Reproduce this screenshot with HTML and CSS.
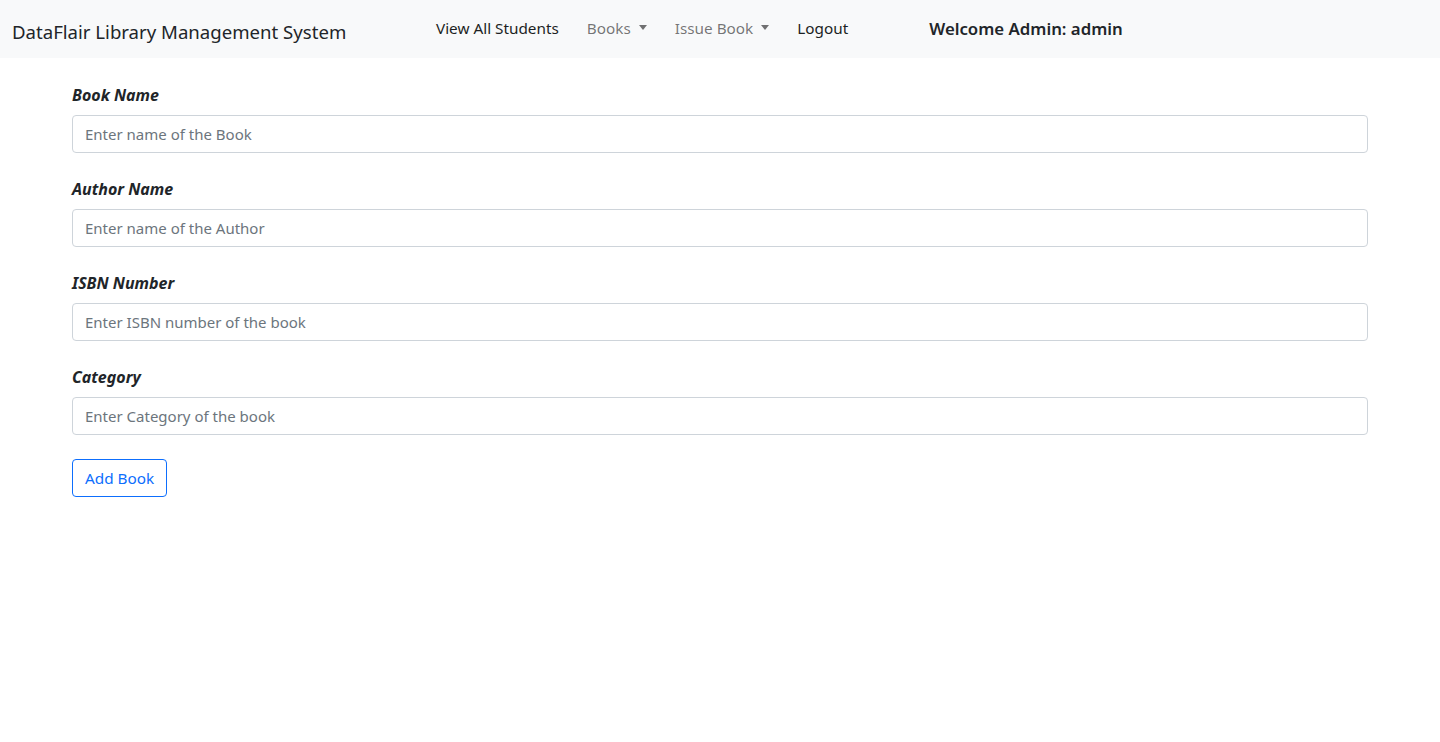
FILE: index.html
```html
<!DOCTYPE html>
<html lang="en">
<head>
<meta charset="utf-8">
<title>DataFlair Library Management System</title>
<link rel="stylesheet" href="styles.css">
</head>
<body>
<nav class="navbar">
  <a class="brand" href="#">DataFlair Library Management System</a>
  <ul class="nav">
    <li><a class="nav-link dark" href="#">View All Students</a></li>
    <li><a class="nav-link muted" href="#">Books<span class="caret"></span></a></li>
    <li><a class="nav-link muted" href="#">Issue Book<span class="caret"></span></a></li>
    <li><a class="nav-link dark" href="#">Logout</a></li>
  </ul>
  <div class="welcome">Welcome Admin: admin</div>
</nav>
<main class="container">
  <form class="form">
    <div class="group">
      <label class="label">Book Name</label>
      <input class="input" type="text" placeholder="Enter name of the Book">
    </div>
    <div class="group">
      <label class="label">Author Name</label>
      <input class="input" type="text" placeholder="Enter name of the Author">
    </div>
    <div class="group">
      <label class="label">ISBN Number</label>
      <input class="input" type="text" placeholder="Enter ISBN number of the book">
    </div>
    <div class="group">
      <label class="label">Category</label>
      <input class="input" type="text" placeholder="Enter Category of the book">
    </div>
    <div class="actions">
      <button class="btn" type="button">Add Book</button>
    </div>
  </form>
</main>
</body>
</html>
```
FILE: styles.css
```css
* { box-sizing: border-box; }
html, body { margin: 0; padding: 0; }
body {
  font-family: "Noto Sans", "Open Sans", sans-serif;
  font-size: 16px;
  line-height: 1.5;
  color: #212529;
  background: #fff;
}
.navbar {
  display: flex;
  align-items: center;
  height: 58px;
  background: #f8f9fa;
  padding: 0 12px;
}
.brand {
  font-size: 18.6px;
  color: #212529;
  text-decoration: none;
  white-space: nowrap;
  width: 410px;
  padding-top: 5px;
}
.nav {
  list-style: none;
  display: flex;
  margin: 0;
  padding: 0 0 2px;
  gap: 0;
}
.nav-link {
  display: inline-flex;
  align-items: center;
  font-size: 15.3px;
  text-decoration: none;
  padding: 0 14px;
  white-space: nowrap;
}
.nav-link.dark { color: #1c1f23; }
.nav-link.muted { color: rgba(0,0,0,.55); }
.caret {
  display: inline-block;
  margin-left: 8px;
  border-top: 5px solid rgba(0,0,0,.55);
  border-left: 4.5px solid transparent;
  border-right: 4.5px solid transparent;
  margin-top: -2px;
}
.welcome {
  margin-left: 67px;
  font-size: 16.8px;
  font-weight: 600;
  color: #212529;
  white-space: nowrap;
}
.container {
  max-width: 1320px;
  margin: 0 auto;
  padding: 25px 12px 0;
}
.group { margin-bottom: 24px; }
.label {
  display: block;
  font-weight: 700;
  font-style: italic;
  font-size: 16px;
  line-height: 24px;
  margin-bottom: 8px;
}
.input {
  display: block;
  width: 100%;
  height: 38px;
  padding: 6px 12px;
  font-family: inherit;
  font-size: 15px;
  color: #212529;
  background: #fff;
  border: 1px solid #ced4da;
  border-radius: 4px;
  outline: none;
}
.input::placeholder { color: #6c757d; opacity: 1; }
.btn {
  font-family: inherit;
  font-size: 15.3px;
  height: 38px;
  padding: 0 12px;
  color: #0d6efd;
  background: transparent;
  border: 1px solid #0d6efd;
  border-radius: 4px;
  cursor: pointer;
}
```
